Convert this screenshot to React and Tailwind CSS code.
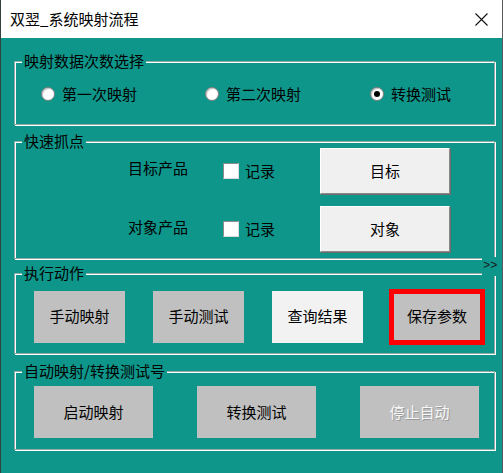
import React from 'react';

const font = { fontFamily: '"Noto Sans CJK SC", "Noto Sans", sans-serif' };

// etched windows groupbox with the caption sitting on the top line
const Group = ({ label, className, children }) => (
  <div className={`relative w-[481px] border border-[#8fa9a5] shadow-[inset_1px_1px_0_#ffffff,1px_1px_0_#ffffff] ${className}`}>
    <span className="absolute -top-[10px] left-[7px] bg-[#0f968a] px-[2px] text-[15px] leading-[18px] text-black">{label}</span>
    {children}
  </div>
);

const Radio = ({ checked, label, className }) => (
  <div className={`flex items-center gap-[7px] ${className}`}>
    <span className="flex h-[14px] w-[14px] items-center justify-center rounded-full border border-[#7d7d7d] bg-white shadow-[inset_1px_1px_0_#c8c8c8]">
      {checked && <span className="h-[6px] w-[6px] rounded-full bg-black" />}
    </span>
    <span className="text-[15px] leading-[20px] text-black">{label}</span>
  </div>
);

const Check = () => (
  <span className="h-[16px] w-[16px] border border-[#8c8c8c] border-b-[#dcdcdc] border-r-[#dcdcdc] bg-white" />
);

const RaisedBtn = ({ children }) => (
  <button className="h-[46px] w-[130px] border border-white border-b-[#8a8a8a] border-r-[#8a8a8a] bg-[#f0f0f0] text-[15px] text-black shadow-[1px_1px_0_#6d6d6d]">
    {children}
  </button>
);

const FlatBtn = ({ children, className = 'w-[91px]', light, disabled }) => (
  <button
    className={`h-[52px] text-[15px] ${className} ${light ? 'bg-[#f2f2f2]' : 'bg-[#c0c0c0]'} ${
      disabled ? 'text-[#f7f7f7] [text-shadow:1px_1px_0_#9a9a9a]' : 'text-black'
    }`}
  >
    {children}
  </button>
);

const App = () => {
  return (
    <div style={font} className="flex h-[473px] w-[503px] flex-col overflow-hidden border-l border-r border-l-[#33413f] border-r-[#5a5a5a] bg-[#0f968a]">
      {/* title bar */}
      <div className="flex h-[38px] shrink-0 items-center justify-between bg-white pl-[9px] pr-[14px]">
        <span className="text-[15px] leading-[20px] text-black">双翌_系统映射流程</span>
        <svg width="13" height="13" viewBox="0 0 13 13">
          <path d="M0.5 0.5 L12.5 12.5 M12.5 0.5 L0.5 12.5" stroke="#111" strokeWidth="1.1" />
        </svg>
      </div>

      {/* body */}
      <div className="relative flex flex-1 flex-col pl-[13px]">
        <Group label="映射数据次数选择" className="mt-[23px] h-[64px]">
          <div className="flex items-center pl-[26px] pt-[22px]">
            <Radio label="第一次映射" className="w-[164px]" />
            <Radio label="第二次映射" className="w-[165px]" />
            <Radio label="转换测试" checked />
          </div>
        </Group>

        <Group label="快速抓点" className="mt-[16px] h-[118px]">
          <div className="flex flex-col gap-[12px] pl-[113px] pt-[6px]">
            <div className="flex items-center">
              <span className="mb-[7px] w-[95px] text-[15px] leading-[20px] text-black">目标产品</span>
              <Check />
              <span className="ml-[6px] w-[75px] text-[15px] leading-[20px] text-black">记录</span>
              <RaisedBtn>目标</RaisedBtn>
            </div>
            <div className="flex items-center">
              <span className="mb-[5px] w-[95px] text-[15px] leading-[20px] text-black">对象产品</span>
              <Check />
              <span className="ml-[6px] w-[75px] text-[15px] leading-[20px] text-black">记录</span>
              <RaisedBtn>对象</RaisedBtn>
            </div>
          </div>
        </Group>

        <Group label="执行动作" className="mt-[14px] h-[81px]">
          <div className="flex h-full items-center pl-[19px] pt-[6px]">
            <FlatBtn>手动映射</FlatBtn>
            <FlatBtn className="ml-[28px] w-[91px]">手动测试</FlatBtn>
            <FlatBtn className="ml-[28px] w-[91px]" light>查询结果</FlatBtn>
            <div className="ml-[26px] flex h-[56px] w-[96px] border-[5px] border-[#ff0000]">
              <FlatBtn className="h-full w-full">保存参数</FlatBtn>
            </div>
          </div>
        </Group>

        <Group label="自动映射/转换测试号" className="mt-[17px] h-[79px]">
          <div className="flex pl-[19px] pt-[14px]">
            <FlatBtn className="w-[119px]">启动映射</FlatBtn>
            <FlatBtn className="ml-[44px] w-[119px]">转换测试</FlatBtn>
            <FlatBtn className="ml-[44px] w-[119px]" disabled>停止自动</FlatBtn>
          </div>
        </Group>

        {/* small expander marker on the right edge */}
        <span
          style={{ fontFamily: '"Liberation Mono", monospace' }}
          className="absolute left-[481px] top-[219px] h-[19px] w-[19px] bg-[#0f968a] pl-[1px] text-[12px] leading-[19px] text-[#1a1a1a]"
        >
          &gt;&gt;
        </span>
      </div>
    </div>
  );
};

export default App;
